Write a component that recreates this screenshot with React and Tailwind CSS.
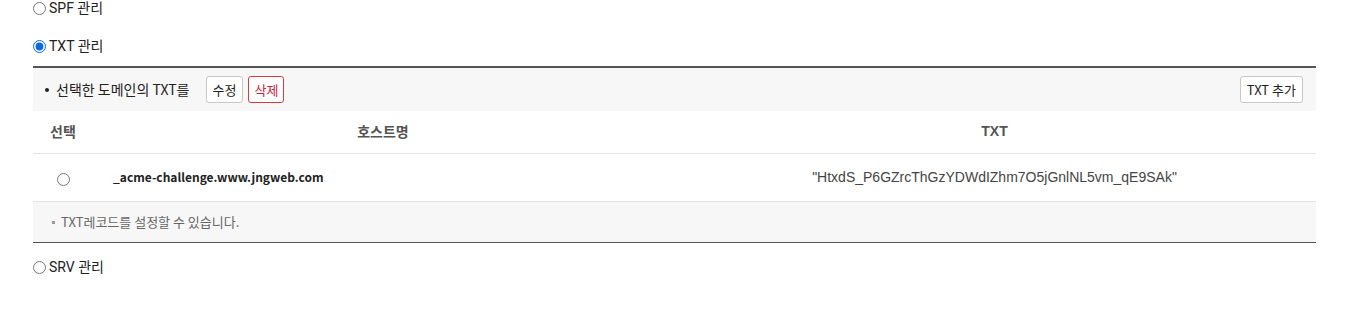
import React, { useState } from 'react';

const records = [
    { id: 1, host: '_acme-challenge.www.jngweb.com', txt: '"HtxdS_P6GZrcThGzYDWdIZhm7O5jGnlNL5vm_qE9SAk"' },
];

const Radio = ({ checked, onChange, className = '' }) => (
    <input
        type="radio"
        checked={checked}
        onChange={onChange}
        className={`m-0 w-[13px] h-[13px] accent-[#0b6bd9] ${className}`}
    />
);

const App = () => {
    const [section, setSection] = useState('TXT');
    const [selected, setSelected] = useState(null);

    return (
        <div className="pl-[33px] pr-[32px] bg-white min-h-[316px] text-[#222] font-['Roboto','Noto_Sans_CJK_KR',sans-serif]">
            <label className="flex items-center h-4 gap-[3px] text-[14px]">
                <Radio checked={section === 'SPF'} onChange={() => setSection('SPF')} />
                <span>SPF 관리</span>
            </label>

            <label className="flex items-center h-4 gap-[3px] text-[14px] mt-[22px]">
                <Radio checked={section === 'TXT'} onChange={() => setSection('TXT')} />
                <span>TXT 관리</span>
            </label>

            <div className="mt-3 border-t-2 border-b border-[#555] font-['Noto_Sans_CJK_KR',sans-serif]">
                <div className="h-[43px] bg-[#f7f7f7] flex items-center justify-between pl-[12px] pr-[13px]">
                    <div className="flex items-center">
                        <span className="w-[4px] h-[4px] rounded-full bg-[#222] mr-[7px]"></span>
                        <span className="text-[14px] text-[#222]">선택한 도메인의 TXT를</span>
                        <button className="ml-[16px] h-[27px] px-[6px] text-[13px] bg-white border border-[#c8c8c8] rounded-[3px] text-[#222]">수정</button>
                        <button className="ml-[5px] h-[27px] px-[5px] text-[13px] bg-white border border-[#d23c3c] rounded-[3px] text-[#c8243c]">삭제</button>
                    </div>
                    <button className="h-[27px] px-[6px] text-[13px] bg-white border border-[#c8c8c8] rounded-[3px] text-[#222]">TXT 추가</button>
                </div>

                <table className="w-full border-collapse">
                    <thead>
                        <tr className="h-[42px] border-b border-[#e2e2e2]">
                            <th className="w-[60px] text-[14px] font-bold text-[#555] text-center">선택</th>
                            <th className="w-[580px] text-[14px] font-bold text-[#555] text-center">호스트명</th>
                            <th className="text-[14px] font-bold text-[#555] text-center font-['Liberation_Sans',sans-serif]">TXT</th>
                        </tr>
                    </thead>
                    <tbody>
                        {records.map((r) => (
                            <tr key={r.id} className="h-[48px] border-b border-[#e2e2e2]">
                                <td className="text-center">
                                    <Radio checked={selected === r.id} onChange={() => setSelected(r.id)} className="align-middle" />
                                </td>
                                <td className="pl-[20px] text-[12px] font-bold text-[#222]">{r.host}</td>
                                <td className="text-center text-[14px] text-[#444] font-['Liberation_Sans',sans-serif]">{r.txt}</td>
                            </tr>
                        ))}
                        <tr className="h-[41px] bg-[#f7f7f7]">
                            <td colSpan={3} className="pl-[19px] text-[13px] text-[#666]">
                                <span className="inline-block w-[3px] h-[3px] bg-[#999] align-middle mr-[6px] mb-[2px]"></span>
                                TXT레코드를 설정할 수 있습니다.
                            </td>
                        </tr>
                    </tbody>
                </table>
            </div>

            <label className="flex items-center h-4 gap-[3px] text-[14px] mt-4">
                <Radio checked={section === 'SRV'} onChange={() => setSection('SRV')} />
                <span>SRV 관리</span>
            </label>
        </div>
    );
};

export default App;
